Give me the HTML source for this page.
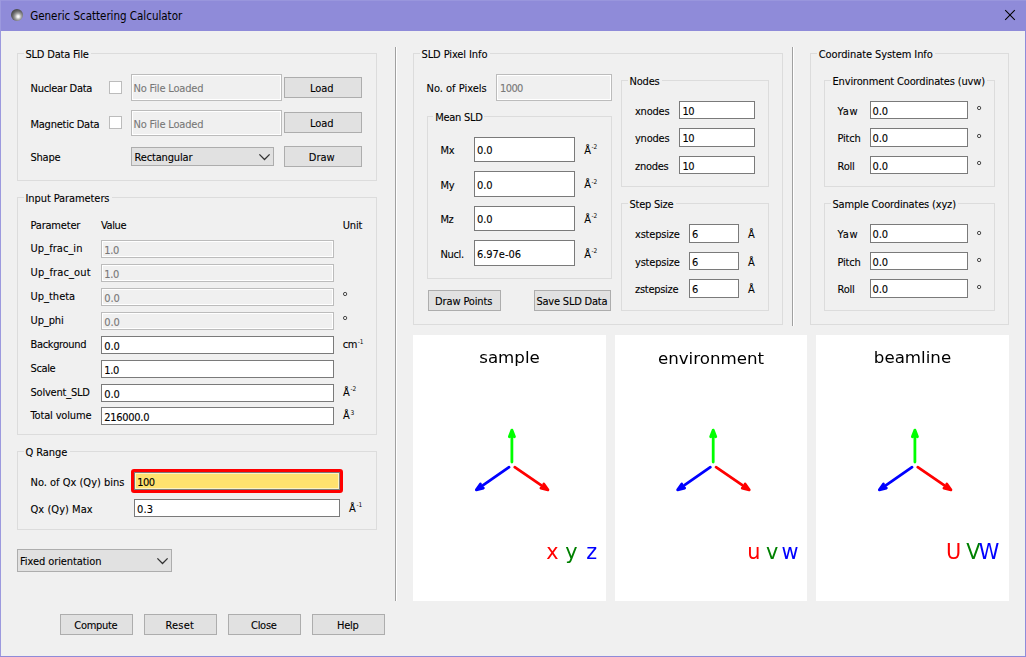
<!DOCTYPE html>
<html lang="en"><head><meta charset="utf-8"><title>Generic Scattering Calculator</title>
<style>
html,body{margin:0;padding:0}
body{width:1026px;height:657px;overflow:hidden;background:#f0f0f0;position:relative;
 font-family:"DejaVu Sans Condensed","Liberation Sans",sans-serif;font-size:11px;color:#000}
body>*{position:absolute;box-sizing:content-box}
.t{line-height:13px;height:13px;white-space:nowrap;-webkit-text-stroke:0.1px currentColor}
.t.c{text-align:center}
.t.g{color:#787878}
.sp{font-size:6.5px;position:relative;top:-4.2px;margin-left:0.6px;-webkit-text-stroke:0;letter-spacing:-0.1px}
.gb{border:1px solid #dcdcdc}
.gbm{height:1px;background:#f0f0f0}
.ed{border:1px solid #7a7a7a;background:#fff}
.ed.dis{border-color:#bcbcbc;background:#f0f0f0;box-shadow:inset 0 0 0 1px #fff}
.ed.yl{background:#ffe26e;border-color:#7a7a7a;box-shadow:inset 0 0 0 1px #fff3c4}
.bt{border:1px solid #adadad;background:#e1e1e1}
.ck{width:11px;height:11px;border:1px solid #bcbcbc;background:#fff}
.vl{width:1px;background:#a0a0a0;border-right:1px solid #fff}
#tb{left:0;top:0;width:1026px;height:31px;background:#8f8bd9}
#tb0{left:0;top:0;width:1026px;height:1px;background:#9996dd}
#bl{left:0;top:0;width:1px;height:657px;background:#9c99de}
#br{left:1025px;top:31px;width:1px;height:626px;background:#8f8bd9}
#bb{left:0;top:656px;width:1026px;height:1px;background:#8f8bd9}
#ico{left:11px;top:9px;width:12px;height:12px;border-radius:50%;
 background:radial-gradient(circle at 60% 63%,#fff 0%,#f2f2f2 10%,#a2a2a2 31%,#6c6c6c 51%,#464646 74%,#3a3a3a 100%)}
#ttl{left:30.2px;top:8.4px;font-family:"DejaVu Sans Condensed","Liberation Sans",sans-serif;letter-spacing:-0.02px;font-size:11.5px;line-height:16px;white-space:nowrap;color:#000}
#red{left:131px;top:469px;width:206px;height:18px;border:3px solid #ff0000;border-radius:3px;background:#ffe26e}
.pl{will-change:transform}
.pl text{font-family:"DejaVu Sans",sans-serif}
</style></head>
<body>
<div id="tb"></div><div id="tb0"></div>
<div id="ico"></div>
<span id="ttl">Generic Scattering Calculator</span>
<svg class="a" style="left:1002px;top:7px" width="16" height="16" viewBox="0 0 16 16"><path d="M3.2 3.2 L12.8 12.8 M12.8 3.2 L3.2 12.8" stroke="#000" stroke-width="1.05" fill="none"/></svg>
<div id="bl"></div><div id="br"></div><div id="bb"></div>
<div class="gb" style="left:17px;top:53px;width:358px;height:126px"></div>
<div class="gbm" style="left:23.5px;top:53px;width:67px"></div>
<span class="t" style="left:25.5px;top:48px;letter-spacing:-0.21px;">SLD Data File</span>
<span class="t" style="left:30.5px;top:82px;letter-spacing:-0.27px;">Nuclear Data</span>
<div class="ck" style="left:109px;top:81px"></div>
<div class="ed dis" style="left:131px;top:74px;width:149px;height:25px"></div>
<span class="t g" style="left:133.5px;top:82px;letter-spacing:-0.18px;">No File Loaded</span>
<div class="bt" style="left:284px;top:77px;width:76px;height:19px"></div>
<span class="t c" style="left:282.8px;width:78px;top:82px;letter-spacing:-0.03px;">Load</span>
<span class="t" style="left:30.5px;top:118px;letter-spacing:-0.25px;">Magnetic Data</span>
<div class="ck" style="left:109px;top:116px"></div>
<div class="ed dis" style="left:131px;top:110px;width:149px;height:24px"></div>
<span class="t g" style="left:133.5px;top:118px;letter-spacing:-0.18px;">No File Loaded</span>
<div class="bt" style="left:284px;top:112px;width:76px;height:19px"></div>
<span class="t c" style="left:282.8px;width:78px;top:117px;letter-spacing:-0.03px;">Load</span>
<span class="t" style="left:30.5px;top:151px;letter-spacing:-0.23px;">Shape</span>
<div class="bt" style="left:131px;top:147px;width:141px;height:17px"></div>
<span class="t" style="left:134.5px;top:151px;letter-spacing:-0.16px;">Rectangular</span>
<svg class="a" style="left:256px;top:147px" width="18" height="19" viewBox="256 147 18 19"><path d="M259.4 154.4 L264.5 159.5 L269.6 154.4" fill="none" stroke="#333" stroke-width="1.3"/></svg>
<div class="bt" style="left:284px;top:146px;width:76px;height:19px"></div>
<span class="t c" style="left:282.7px;width:78px;top:151px;letter-spacing:-0.05px;">Draw</span>
<div class="gb" style="left:17px;top:197px;width:358px;height:236px"></div>
<div class="gbm" style="left:23.5px;top:197px;width:88px"></div>
<span class="t" style="left:25.5px;top:192px;letter-spacing:-0.09px;">Input Parameters</span>
<span class="t" style="left:30.5px;top:219px;letter-spacing:-0.20px;">Parameter</span>
<span class="t" style="left:101px;top:219px;letter-spacing:-0.37px;">Value</span>
<span class="t" style="left:342.8px;top:219px;letter-spacing:-0.22px;">Unit</span>
<span class="t" style="left:30.5px;top:242px;letter-spacing:0.05px;">Up_frac_in</span>
<div class="ed dis" style="left:101px;top:240px;width:231px;height:16px"></div>
<span class="t g" style="left:104.2px;top:244px;letter-spacing:-0.31px;">1.0</span>
<span class="t" style="left:30.5px;top:266px;letter-spacing:0.14px;">Up_frac_out</span>
<div class="ed dis" style="left:101px;top:264px;width:231px;height:16px"></div>
<span class="t g" style="left:104.2px;top:268px;letter-spacing:-0.31px;">1.0</span>
<span class="t" style="left:30.5px;top:290px;">Up_theta</span>
<div class="ed dis" style="left:101px;top:288px;width:231px;height:16px"></div>
<span class="t g" style="left:104.2px;top:292px;letter-spacing:-0.05px;">0.0</span>
<span class="t" style="left:30.5px;top:314px;letter-spacing:-0.11px;">Up_phi</span>
<div class="ed dis" style="left:101px;top:312px;width:231px;height:16px"></div>
<span class="t g" style="left:104.2px;top:316px;letter-spacing:-0.05px;">0.0</span>
<span class="t" style="left:30.5px;top:338px;letter-spacing:-0.34px;">Background</span>
<div class="ed" style="left:101px;top:336px;width:231px;height:16px"></div>
<span class="t" style="left:104.2px;top:340px;letter-spacing:-0.05px;">0.0</span>
<span class="t" style="left:30.5px;top:362px;letter-spacing:-0.36px;">Scale</span>
<div class="ed" style="left:101px;top:360px;width:231px;height:16px"></div>
<span class="t" style="left:104.2px;top:364px;letter-spacing:-0.31px;">1.0</span>
<span class="t" style="left:30.5px;top:386px;letter-spacing:-0.21px;">Solvent_SLD</span>
<div class="ed" style="left:101px;top:384px;width:231px;height:16px"></div>
<span class="t" style="left:104.2px;top:388px;letter-spacing:-0.05px;">0.0</span>
<span class="t" style="left:30.5px;top:409px;letter-spacing:-0.15px;">Total volume</span>
<div class="ed" style="left:101px;top:407px;width:231px;height:16px"></div>
<span class="t" style="left:104.2px;top:411px;letter-spacing:-0.28px;">216000.0</span>
<svg class="a" style="left:341px;top:290.0px" width="8" height="8" viewBox="0 0 8 8"><circle cx="4.1" cy="4" r="1.65" fill="none" stroke="#2a2a2a" stroke-width="0.85"/></svg>
<svg class="a" style="left:341px;top:314.0px" width="8" height="8" viewBox="0 0 8 8"><circle cx="4.1" cy="4" r="1.65" fill="none" stroke="#2a2a2a" stroke-width="0.85"/></svg>
<span class="t" style="left:342.7px;top:338px;letter-spacing:-0.35px">cm<span class="sp">-1</span></span>
<span class="t" style="left:343px;top:385.5px">Å<span class="sp">-2</span></span>
<span class="t" style="left:343px;top:409px">Å<span class="sp">3</span></span>
<div class="gb" style="left:17px;top:451px;width:358px;height:77px"></div>
<div class="gbm" style="left:23.5px;top:451px;width:46px"></div>
<span class="t" style="left:25.5px;top:446px;letter-spacing:-0.09px;">Q Range</span>
<span class="t" style="left:30.5px;top:476px;">No. of Qx (Qy) bins</span>
<div id="red"></div>
<div class="ed yl" style="left:134px;top:472px;width:204px;height:16px"></div>
<span class="t" style="left:137.3px;top:476px;letter-spacing:-0.60px;">100</span>
<span class="t" style="left:30.5px;top:503px;letter-spacing:0.04px;">Qx (Qy) Max</span>
<div class="ed" style="left:134px;top:499px;width:204px;height:16px"></div>
<span class="t" style="left:137px;top:503px;letter-spacing:0.19px;">0.3</span>
<span class="t" style="left:349px;top:501.5px">Å<span class="sp">-1</span></span>
<div class="bt" style="left:17px;top:549px;width:153px;height:21px"></div>
<span class="t" style="left:20px;top:554.5px;letter-spacing:-0.08px;">Fixed orientation</span>
<svg class="a" style="left:154px;top:549px" width="18" height="23" viewBox="154 549 18 23"><path d="M157.4 558.4 L162.5 563.5 L167.6 558.4" fill="none" stroke="#333" stroke-width="1.3"/></svg>
<div class="bt" style="left:60px;top:614px;width:71px;height:19px"></div>
<span class="t c" style="left:59.3px;width:73px;top:618.5px;letter-spacing:-0.30px;">Compute</span>
<div class="bt" style="left:144px;top:614px;width:71px;height:19px"></div>
<span class="t c" style="left:143.3px;width:73px;top:618.5px;letter-spacing:0.19px;">Reset</span>
<div class="bt" style="left:228px;top:614px;width:71px;height:19px"></div>
<span class="t c" style="left:227.3px;width:73px;top:618.5px;letter-spacing:-0.28px;">Close</span>
<div class="bt" style="left:312px;top:614px;width:71px;height:19px"></div>
<span class="t c" style="left:311.3px;width:73px;top:618.5px;letter-spacing:-0.19px;">Help</span>
<div class="vl" style="left:395px;top:47px;height:554px"></div>
<div class="vl" style="left:792px;top:47px;height:279px"></div>
<div class="gb" style="left:413px;top:53px;width:368px;height:270px"></div>
<div class="gbm" style="left:419.5px;top:53px;width:70px"></div>
<span class="t" style="left:421.5px;top:48px;letter-spacing:-0.10px;">SLD Pixel Info</span>
<span class="t" style="left:426.5px;top:82px;">No. of Pixels</span>
<div class="ed dis" style="left:496px;top:74px;width:114px;height:25px"></div>
<span class="t g" style="left:500px;top:82px;letter-spacing:-0.60px;">1000</span>
<div class="gb" style="left:427px;top:116px;width:183px;height:161px"></div>
<div class="gbm" style="left:433.2px;top:116px;width:51px"></div>
<span class="t" style="left:435.2px;top:111px;letter-spacing:-0.28px;">Mean SLD</span>
<span class="t" style="left:440.5px;top:144px;letter-spacing:-0.30px;">Mx</span>
<div class="ed" style="left:474px;top:137px;width:99px;height:23px"></div>
<span class="t" style="left:477px;top:144px;letter-spacing:-0.05px;">0.0</span>
<span class="t" style="left:584.2px;top:143.6px">Å<span class="sp">-2</span></span>
<span class="t" style="left:440.5px;top:178.6px;letter-spacing:-0.30px;">My</span>
<div class="ed" style="left:474px;top:171px;width:99px;height:24px"></div>
<span class="t" style="left:477px;top:178.6px;letter-spacing:-0.05px;">0.0</span>
<span class="t" style="left:584.2px;top:178.2px">Å<span class="sp">-2</span></span>
<span class="t" style="left:440.5px;top:213px;letter-spacing:-0.52px;">Mz</span>
<div class="ed" style="left:474px;top:206px;width:99px;height:23px"></div>
<span class="t" style="left:477px;top:213px;letter-spacing:-0.05px;">0.0</span>
<span class="t" style="left:584.2px;top:212.6px">Å<span class="sp">-2</span></span>
<span class="t" style="left:440.5px;top:248px;letter-spacing:-0.35px;">Nucl.</span>
<div class="ed" style="left:474px;top:240px;width:99px;height:24px"></div>
<span class="t" style="left:477px;top:248px;letter-spacing:-0.04px;">6.97e-06</span>
<span class="t" style="left:584.2px;top:247.60000000000002px">Å<span class="sp">-2</span></span>
<div class="bt" style="left:428px;top:290px;width:71px;height:19px"></div>
<span class="t c" style="left:427.2px;width:73px;top:294.5px;letter-spacing:-0.14px;">Draw Points</span>
<div class="bt" style="left:534px;top:290px;width:75px;height:19px"></div>
<span class="t c" style="left:533.4px;width:77px;top:294.5px;letter-spacing:-0.21px;">Save SLD Data</span>
<div class="gb" style="left:621px;top:80px;width:146px;height:105px"></div>
<div class="gbm" style="left:627.5px;top:80px;width:34px"></div>
<span class="t" style="left:629.5px;top:75px;letter-spacing:-0.18px;">Nodes</span>
<span class="t" style="left:635px;top:105px;letter-spacing:-0.23px;">xnodes</span>
<div class="ed" style="left:679px;top:101px;width:74px;height:16px"></div>
<span class="t" style="left:682.5px;top:105px;letter-spacing:-0.60px;">10</span>
<span class="t" style="left:635px;top:132px;letter-spacing:-0.23px;">ynodes</span>
<div class="ed" style="left:679px;top:128px;width:74px;height:17px"></div>
<span class="t" style="left:682.5px;top:132px;letter-spacing:-0.60px;">10</span>
<span class="t" style="left:635px;top:160px;letter-spacing:-0.29px;">znodes</span>
<div class="ed" style="left:679px;top:156px;width:74px;height:16px"></div>
<span class="t" style="left:682.5px;top:160px;letter-spacing:-0.60px;">10</span>
<div class="gb" style="left:621px;top:203px;width:146px;height:106px"></div>
<div class="gbm" style="left:627.5px;top:203px;width:48px"></div>
<span class="t" style="left:629.5px;top:198px;letter-spacing:-0.24px;">Step Size</span>
<span class="t" style="left:635px;top:228px;letter-spacing:-0.21px;">xstepsize</span>
<div class="ed" style="left:689px;top:224px;width:48px;height:17px"></div>
<span class="t" style="left:692px;top:228px;">6</span>
<span class="t" style="left:748px;top:228px;">Å</span>
<span class="t" style="left:635px;top:256px;letter-spacing:-0.21px;">ystepsize</span>
<div class="ed" style="left:689px;top:252px;width:48px;height:16px"></div>
<span class="t" style="left:692px;top:256px;">6</span>
<span class="t" style="left:748px;top:256px;">Å</span>
<span class="t" style="left:635px;top:283px;letter-spacing:-0.28px;">zstepsize</span>
<div class="ed" style="left:689px;top:279px;width:48px;height:17px"></div>
<span class="t" style="left:692px;top:283px;">6</span>
<span class="t" style="left:748px;top:283px;">Å</span>
<div class="gb" style="left:810px;top:53px;width:197px;height:270px"></div>
<div class="gbm" style="left:816.7px;top:53px;width:118px"></div>
<span class="t" style="left:818.7px;top:48px;letter-spacing:-0.10px;">Coordinate System Info</span>
<div class="gb" style="left:824px;top:80px;width:169px;height:105px"></div>
<div class="gbm" style="left:830.5px;top:80px;width:156px"></div>
<span class="t" style="left:832.5px;top:75px;letter-spacing:-0.15px;">Environment Coordinates (uvw)</span>
<span class="t" style="left:837.6px;top:105px;letter-spacing:0.60px;">Yaw</span>
<div class="ed" style="left:870px;top:101px;width:96px;height:16px"></div>
<span class="t" style="left:872.4px;top:105px;letter-spacing:-0.05px;">0.0</span>
<svg class="a" style="left:975px;top:104.2px" width="8" height="8" viewBox="0 0 8 8"><circle cx="4.1" cy="4" r="1.65" fill="none" stroke="#2a2a2a" stroke-width="0.85"/></svg>
<span class="t" style="left:837.6px;top:132px;letter-spacing:-0.24px;">Pitch</span>
<div class="ed" style="left:870px;top:128px;width:96px;height:17px"></div>
<span class="t" style="left:872.4px;top:132px;letter-spacing:-0.05px;">0.0</span>
<svg class="a" style="left:975px;top:132.3px" width="8" height="8" viewBox="0 0 8 8"><circle cx="4.1" cy="4" r="1.65" fill="none" stroke="#2a2a2a" stroke-width="0.85"/></svg>
<span class="t" style="left:837.6px;top:159.6px;letter-spacing:-0.27px;">Roll</span>
<div class="ed" style="left:870px;top:156px;width:96px;height:16px"></div>
<span class="t" style="left:872.4px;top:159.6px;letter-spacing:-0.05px;">0.0</span>
<svg class="a" style="left:975px;top:159.0px" width="8" height="8" viewBox="0 0 8 8"><circle cx="4.1" cy="4" r="1.65" fill="none" stroke="#2a2a2a" stroke-width="0.85"/></svg>
<div class="gb" style="left:824px;top:203px;width:169px;height:106px"></div>
<div class="gbm" style="left:830.5px;top:203px;width:127px"></div>
<span class="t" style="left:832.5px;top:198px;letter-spacing:-0.17px;">Sample Coordinates (xyz)</span>
<span class="t" style="left:837.6px;top:228px;letter-spacing:0.60px;">Yaw</span>
<div class="ed" style="left:870px;top:224px;width:96px;height:17px"></div>
<span class="t" style="left:872.4px;top:228px;letter-spacing:-0.05px;">0.0</span>
<svg class="a" style="left:975px;top:228.5px" width="8" height="8" viewBox="0 0 8 8"><circle cx="4.1" cy="4" r="1.65" fill="none" stroke="#2a2a2a" stroke-width="0.85"/></svg>
<span class="t" style="left:837.6px;top:256px;letter-spacing:-0.24px;">Pitch</span>
<div class="ed" style="left:870px;top:252px;width:96px;height:16px"></div>
<span class="t" style="left:872.4px;top:256px;letter-spacing:-0.05px;">0.0</span>
<svg class="a" style="left:975px;top:255.5px" width="8" height="8" viewBox="0 0 8 8"><circle cx="4.1" cy="4" r="1.65" fill="none" stroke="#2a2a2a" stroke-width="0.85"/></svg>
<span class="t" style="left:837.6px;top:283px;letter-spacing:-0.27px;">Roll</span>
<div class="ed" style="left:870px;top:279px;width:96px;height:17px"></div>
<span class="t" style="left:872.4px;top:283px;letter-spacing:-0.05px;">0.0</span>
<svg class="a" style="left:975px;top:283.3px" width="8" height="8" viewBox="0 0 8 8"><circle cx="4.1" cy="4" r="1.65" fill="none" stroke="#2a2a2a" stroke-width="0.85"/></svg>
<svg class="a pl" style="left:413px;top:335px" width="193" height="266" viewBox="413 335 193 266"><rect x="413" y="335" width="193" height="266" fill="#fff"/><text x="509.5" y="363" text-anchor="middle" font-size="16.67" fill="#000">sample</text><path d="M511.90 462.10 L511.90 430.10 M509.32 436.82 L511.90 430.10 L514.48 436.82" fill="none" stroke="#00ff00" stroke-width="2.78" stroke-linejoin="round" stroke-linecap="round"/><path d="M514.73 467.16 L547.93 489.87 M543.83 483.94 L547.93 489.87 L540.92 488.20" fill="none" stroke="#ff0000" stroke-width="2.78" stroke-linejoin="round" stroke-linecap="round"/><path d="M509.08 467.17 L476.37 489.86 M483.36 488.15 L476.37 489.86 L480.42 483.91" fill="none" stroke="#0000ff" stroke-width="2.78" stroke-linejoin="round" stroke-linecap="round"/><text x="546.2" y="558.6" font-size="20.8" fill="#ff0000">x</text><text x="565.3" y="558.6" font-size="20.8" fill="#008000">y</text><text x="586.2" y="558.6" font-size="20.8" fill="#0000ff">z</text></svg>
<svg class="a pl" style="left:615px;top:335px" width="192" height="266" viewBox="615 335 192 266"><rect x="615" y="335" width="192" height="266" fill="#fff"/><text x="711.0" y="364" text-anchor="middle" font-size="16.67" fill="#000">environment</text><path d="M713.20 462.10 L713.20 430.10 M710.62 436.82 L713.20 430.10 L715.78 436.82" fill="none" stroke="#00ff00" stroke-width="2.78" stroke-linejoin="round" stroke-linecap="round"/><path d="M716.03 467.16 L749.23 489.87 M745.13 483.94 L749.23 489.87 L742.22 488.20" fill="none" stroke="#ff0000" stroke-width="2.78" stroke-linejoin="round" stroke-linecap="round"/><path d="M710.38 467.17 L677.67 489.86 M684.66 488.15 L677.67 489.86 L681.72 483.91" fill="none" stroke="#0000ff" stroke-width="2.78" stroke-linejoin="round" stroke-linecap="round"/><text x="747.2" y="558.6" font-size="20.8" fill="#ff0000">u</text><text x="766.1" y="558.6" font-size="20.8" fill="#008000">v</text><text x="781.4" y="558.6" font-size="20.8" fill="#0000ff">w</text></svg>
<svg class="a pl" style="left:816px;top:335px" width="193" height="266" viewBox="816 335 193 266"><rect x="816" y="335" width="193" height="266" fill="#fff"/><text x="912.5" y="363" text-anchor="middle" font-size="16.67" fill="#000">beamline</text><path d="M914.90 462.10 L914.90 430.10 M912.32 436.82 L914.90 430.10 L917.48 436.82" fill="none" stroke="#00ff00" stroke-width="2.78" stroke-linejoin="round" stroke-linecap="round"/><path d="M917.73 467.16 L950.93 489.87 M946.83 483.94 L950.93 489.87 L943.92 488.20" fill="none" stroke="#ff0000" stroke-width="2.78" stroke-linejoin="round" stroke-linecap="round"/><path d="M912.08 467.17 L879.37 489.86 M886.36 488.15 L879.37 489.86 L883.42 483.91" fill="none" stroke="#0000ff" stroke-width="2.78" stroke-linejoin="round" stroke-linecap="round"/><text x="945.9" y="558.6" font-size="20.8" fill="#ff0000">U</text><text x="966.3" y="558.6" font-size="20.8" fill="#008000">V</text><text x="978.7" y="558.6" font-size="20.8" fill="#0000ff">W</text></svg>
</body></html>
